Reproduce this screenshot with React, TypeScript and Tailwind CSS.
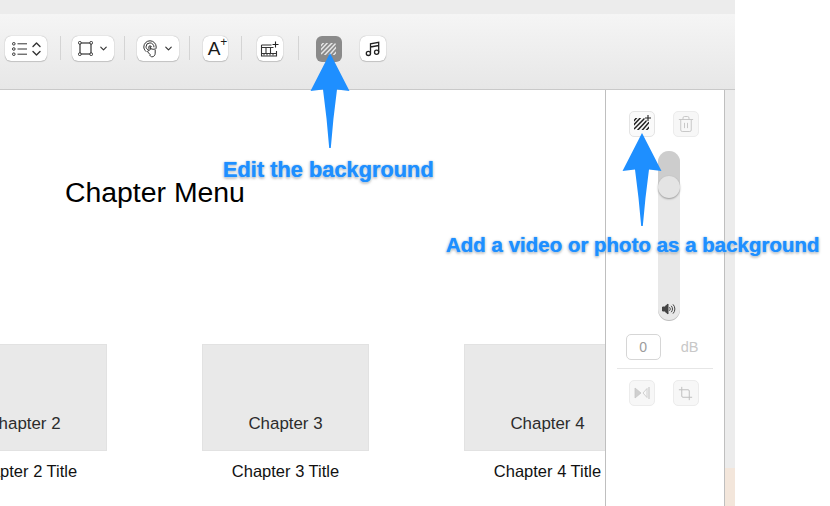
import type { ReactNode } from "react";
import { ChevronDown, Crop, Trash2 } from "lucide-react";

function ToolButton({ className, children }: { className: string; children: ReactNode }) {
  return (
    <div
      className={`flex h-[25px] items-center justify-center rounded-[6px] bg-white shadow-[0_0_1px_rgba(0,0,0,0.4),0_1px_1px_rgba(0,0,0,0.14)] ${className}`}
    >
      {children}
    </div>
  );
}

function Separator({ className }: { className: string }) {
  return <div className={`h-[24px] w-px bg-[#d4d4d4] ${className}`} />;
}

function PanelButton({ children, active }: { children: ReactNode; active?: boolean }) {
  return (
    <div
      className={`flex size-[26px] items-center justify-center rounded-[5px] border ${
        active ? "border-[#e4e4e4] bg-[#fafafa]" : "border-[#ececec] bg-[#f7f7f7]"
      }`}
    >
      {children}
    </div>
  );
}

function ListIcon() {
  return (
    <svg width="15" height="14" viewBox="0 0 15 14" fill="none" stroke="#333" strokeWidth="1">
      <circle cx="1.8" cy="1.8" r="1.3" />
      <circle cx="1.8" cy="7" r="1.3" />
      <circle cx="1.8" cy="12.2" r="1.3" />
      <path d="M5.5 1.8h9.5M5.5 7h9.5M5.5 12.2h9.5" />
    </svg>
  );
}

function UpDownIcon() {
  return (
    <svg width="9" height="14" viewBox="0 0 9 14" fill="none" stroke="#333" strokeWidth="1.4" strokeLinecap="round" strokeLinejoin="round">
      <path d="M1 4.5 4.5 1 8 4.5M1 9.5 4.5 13 8 9.5" />
    </svg>
  );
}

function FrameIcon() {
  return (
    <svg width="15" height="15" viewBox="0 0 15 15" fill="#fff" stroke="#222" strokeWidth="0.9">
      <rect x="2" y="2" width="11" height="11" fill="none" strokeWidth="1.1" />
      <rect x="0.5" y="0.5" width="2.6" height="2.6" rx="1" />
      <rect x="11.9" y="0.5" width="2.6" height="2.6" rx="1" />
      <rect x="0.5" y="11.9" width="2.6" height="2.6" rx="1" />
      <rect x="11.9" y="11.9" width="2.6" height="2.6" rx="1" />
    </svg>
  );
}

function HandIcon() {
  return (
    <svg width="16" height="18" viewBox="0 0 16 18" fill="none" stroke="#333" strokeWidth="1" strokeLinecap="round">
      <path d="M3 11.5C1.3 9.8.8 8.2.8 7a6.2 6.2 0 0 1 12.4 0c0 .7-.1 1.2-.3 1.7" />
      <path d="M4.6 9.6C3.6 8.6 3 7.8 3 6.9a4 4 0 0 1 8 0" />
      <path d="M5.8 7a1.4 1.4 0 0 1 2.6-.4" />
      <path
        fill="#fff"
        d="M7 14.5 4.8 12c-.7-.9.4-1.8 1.2-1V6.8c0-1 1.6-1 1.6 0v2.6c0-.9 1.6-.9 1.6 0 0-.8 1.5-.8 1.5.1.1-.7 1.5-.6 1.5.3v3.4c0 2-1.3 3.6-3.1 3.6-1 0-1.6-.4-2.1-1.3z"
      />
    </svg>
  );
}

function MovieIcon() {
  return (
    <svg width="20" height="18" viewBox="0 0 20 18" fill="none" stroke="#333" strokeWidth="1.1">
      <path d="M1.5 5h10M1.5 5v11h15v-5" />
      <path d="M1.5 7.5h12M1.5 13.5h15M6 7.5v6M10.5 7.5v6" />
      <path d="M3.5 14.7h1M6.5 14.7h1M9.5 14.7h1M12.5 14.7h1" strokeWidth="1.6" />
      <path d="M15.5 1.5v6M12.5 4.5h6" stroke="#222" />
    </svg>
  );
}

function MusicIcon() {
  return (
    <svg width="16" height="16" viewBox="0 0 16 16" fill="none" stroke="#222" strokeWidth="1.3">
      <circle cx="3.4" cy="12.4" r="2.1" />
      <circle cx="11.6" cy="11.2" r="2.1" />
      <path d="M5.5 12.4V2.8l8.2-1.5v9.9M5.5 6l8.2-1.5" />
    </svg>
  );
}

function StripeIcon({ id, color, plus }: { id: string; color: string; plus?: boolean }) {
  return (
    <svg width="20" height="20" viewBox="0 0 20 20" fill="none">
      <clipPath id={id}>
        <rect x="2" y="4" width="15" height="12" rx="1.5" />
      </clipPath>
      <g clipPath={`url(#${id})`} stroke={color} strokeWidth="1.5">
        <path d="M-3 8 5-1M-3 12 9-1M-3 16 12 0M-1 18 16 1M3 19 19 2M7 20 19 6M11 20 20 10" />
      </g>
      {plus && (
        <>
          <path d="M16 .5v7M12.5 4h7" stroke="#fafafa" strokeWidth="3" />
          <path d="M16 1v6M13 4h6" stroke="#222" strokeWidth="1.1" />
        </>
      )}
    </svg>
  );
}

function SpeakerIcon() {
  return (
    <svg width="14" height="12" viewBox="0 0 14 12" fill="none" stroke="#444" strokeWidth="1">
      <path d="M0.5 4h2L6 1v10L2.5 8h-2z" fill="#444" />
      <path d="M7.5 4.2a2.6 2.6 0 0 1 0 3.6M9.2 2.8a4.6 4.6 0 0 1 0 6.4M11 1.4a6.6 6.6 0 0 1 0 9.2" />
    </svg>
  );
}

function SplitIcon() {
  return (
    <svg width="16" height="14" viewBox="0 0 16 14" fill="#cfcfcf" stroke="#c6c6c6" strokeWidth="0.8">
      <path d="M1 2v10l6-5z" />
      <path d="M13 2.5 9 7l4 4.5z" fill="none" />
      <path d="M15 1v12" fill="none" strokeWidth="1.1" />
    </svg>
  );
}

function Arrow({ className, h }: { className: string; h: number }) {
  // tip at the top, wings at 38px, tapering shaft below
  return (
    <svg className={className} width="40" height={h} viewBox={`0 0 40 ${h}`}>
      <path d={`M20 0 39.5 38 27 36.5Q23 66 20.8 ${h}H19.2Q17 66 13 36.5L.5 38z`} fill="#1e8fff" />
    </svg>
  );
}

function ChapterCard({ n }: { n: number }) {
  return (
    <div className="flex w-[167px] shrink-0 flex-col items-center">
      <div className="flex h-[107px] w-full items-end justify-center border border-[#e2e2e2] bg-[#e9e9e9] pb-[16px] text-[16.9px] leading-[20px] text-[#2c2c2c]">
        Chapter {n}
      </div>
      <div className="mt-[10px] text-[16.5px] leading-[20px] text-[#111]">Chapter {n} Title</div>
    </div>
  );
}

const calloutText =
  "absolute font-bold leading-[24px] whitespace-nowrap text-[#1e8fff] [text-shadow:0_0_1px_#1e8fff,0_0_2px_#fff,0_0_3px_#fff,0_1px_3px_rgba(0,0,0,0.55)]";

export default function App() {
  return (
    <div className="relative h-[506px] w-[830px] overflow-hidden bg-white font-['Liberation_Sans',Arial,sans-serif]">
      <div className="flex h-full w-[735px] flex-col bg-[#ececec]">
        <div className="mt-[14px] flex h-[76px] shrink-0 items-start border-b border-[#c9c9c9] bg-gradient-to-b from-[#f5f5f5] to-[#e7e7e7] pt-[22px]">
          <ToolButton className="ml-[5px] w-[42px] gap-[5px]">
            <ListIcon />
            <UpDownIcon />
          </ToolButton>
          <Separator className="ml-[13px]" />
          <ToolButton className="ml-[11px] w-[42px] gap-[5px]">
            <FrameIcon />
            <ChevronDown size={11} color="#333" strokeWidth={2.5} />
          </ToolButton>
          <Separator className="ml-[10px]" />
          <ToolButton className="ml-[12px] w-[42px] gap-[4px]">
            <HandIcon />
            <ChevronDown size={11} color="#333" strokeWidth={2.5} />
          </ToolButton>
          <Separator className="ml-[10px]" />
          <ToolButton className="ml-[13px] w-[25px] rounded-[4px]">
            <span className="relative pr-[3px] text-[19px] leading-none text-[#1a1a1a]">
              A
              <span className="absolute right-[-4px] top-[-3px] text-[12px] leading-none">+</span>
            </span>
          </ToolButton>
          <Separator className="ml-[13px]" />
          <ToolButton className="ml-[15px] w-[26px]">
            <MovieIcon />
          </ToolButton>
          <Separator className="ml-[15px]" />
          <div className="ml-[17px] flex size-[26px] items-center justify-center rounded-[6px] bg-[#8a8a8a]">
            <StripeIcon id="bg-stripes" color="#e6e6e6" />
          </div>
          <ToolButton className="ml-[18px] w-[26px]">
            <MusicIcon />
          </ToolButton>
        </div>

        <div className="flex min-h-0 flex-1">
          <div className="w-[605px] shrink-0 overflow-hidden bg-white">
            <div className="ml-[65px] mt-[85px] text-[28.4px] leading-[34px] whitespace-nowrap text-black">
              Chapter Menu
            </div>
            <div className="-ml-[60px] mt-[135px] flex gap-[95px]">
              <ChapterCard n={2} />
              <ChapterCard n={3} />
              <ChapterCard n={4} />
            </div>
          </div>

          <div className="flex w-[120px] shrink-0 flex-col items-center border-x border-[#bfbfbf] bg-white">
            <div className="-ml-[3px] mt-[21px] flex gap-[18px]">
              <PanelButton active>
                <StripeIcon id="add-stripes" color="#222" plus />
              </PanelButton>
              <PanelButton>
                <Trash2 size={18} color="#c6c6c6" strokeWidth={1.3} />
              </PanelButton>
            </div>
            <div className="relative ml-[8px] mt-[14px] flex h-[169px] w-[22px] flex-col overflow-visible rounded-full bg-[#e8e8e8] shadow-[0_1px_0_#bdbdbd]">
              <div className="h-[36px] rounded-t-full bg-[#cdcdcd]" />
              <div className="absolute left-0 top-[25px] size-[22px] rounded-full bg-[#e4e4e4] shadow-[0_1px_2px_rgba(0,0,0,0.35)]" />
              <div className="mt-auto flex justify-center pb-[5px]">
                <SpeakerIcon />
              </div>
            </div>
            <div className="mt-[14px] flex items-center">
              <div className="flex h-[26px] w-[35px] items-center justify-center rounded-[5px] border border-[#d6d6d6] text-[14px] text-[#9c9c9c]">
                0
              </div>
              <span className="ml-[20px] mr-[6px] mt-[2px] text-[14.5px] text-[#c8c8c8]">dB</span>
            </div>
            <div className="mt-[8px] h-px w-[96px] bg-[#e6e6e6]" />
            <div className="-ml-[3px] mt-[11px] flex gap-[18px]">
              <PanelButton>
                <SplitIcon />
              </PanelButton>
              <PanelButton>
                <Crop size={15} color="#c0c0c0" strokeWidth={1.6} />
              </PanelButton>
            </div>
          </div>

          <div className="flex w-[10px] shrink-0 flex-col">
            <div className="flex-1" />
            <div className="h-[38px] bg-[#f3e6db]" />
          </div>
        </div>
      </div>

      <Arrow className="absolute left-[310px] top-[53px]" h={95} />
      <Arrow className="absolute left-[622px] top-[133px]" h={93} />
      <div className={`${calloutText} left-[223px] top-[158px] text-[21.8px]`}>Edit the background</div>
      <div className={`${calloutText} left-[446px] top-[233px] text-[20.5px]`}>
        Add a video or photo as a background
      </div>
    </div>
  );
}
